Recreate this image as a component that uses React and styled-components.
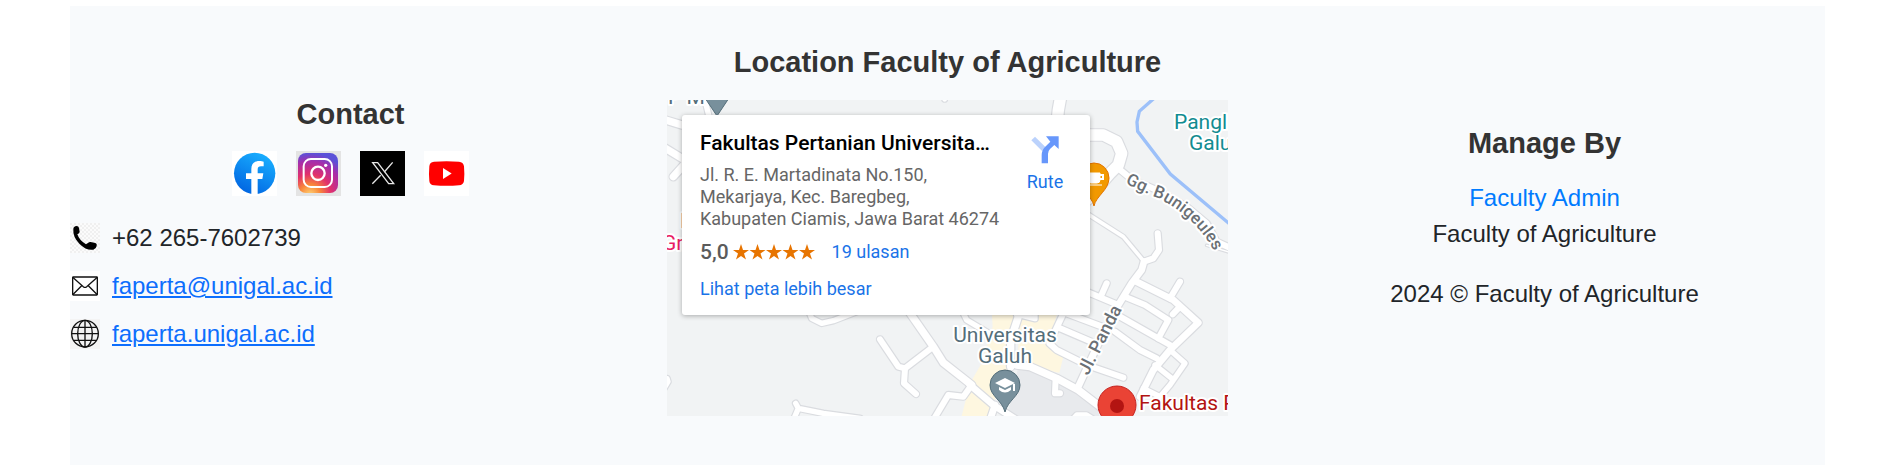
import React from "react";
import styled, { createGlobalStyle } from "styled-components";

const GlobalStyle = createGlobalStyle`
  * { box-sizing: border-box; }
  body {
    margin: 0;
    background: #fff;
    color: #212529;
    font-family: "Liberation Sans", Arial, sans-serif;
    font-size: 24px;
    line-height: 36px;
  }
`;

const Page = styled.div`
  padding: 6px 67px 0 70px;
`;

const Footer = styled.footer`
  display: grid;
  grid-template-columns: repeat(3, minmax(0, 1fr));
  column-gap: 36px;
  align-items: center;
  padding: 39px 0 49px;
  background: #f8fafc;
`;

const Column = styled.section`
  text-align: center;
`;

const Heading = styled.h2`
  margin: 0 0 ${(p) => p.$gap || 20}px;
  color: #333;
  font-size: 29px;
  line-height: 35px;
  font-weight: 700;
`;

const SocialRow = styled.nav`
  display: flex;
  justify-content: center;
  gap: 19px;
  margin-bottom: 24px;
`;

const SocialLink = styled.a`
  display: block;
  width: 45px;
  height: 45px;
  svg { display: block; }
`;

const ContactList = styled.ul`
  list-style: none;
  margin: 0;
  padding: 0;
`;

const ContactItem = styled.li`
  display: flex;
  align-items: center;
  gap: 12px;
  margin-bottom: 12px;
`;

const ContactLink = styled.a`
  color: #0d6efd;
  text-decoration: underline;
`;

const AdminLink = styled.a`
  color: #007bff;
  text-decoration: none;
`;

const Paragraph = styled.p`
  margin: 0 0 24px;
`;

const MapFrame = styled.div`
  position: relative;
  height: 316px;
  overflow: hidden;
  text-align: left;
  font-family: Roboto, sans-serif;
`;

const MapCanvas = styled.svg`
  display: block;
  width: 100%;
  height: 100%;
`;

const PlaceCard = styled.article`
  position: absolute;
  top: 15px;
  left: 15px;
  display: flex;
  width: 408px;
  height: 200px;
  padding: 17px 18px;
  background: #fff;
  border-radius: 3px;
  box-shadow: 0 1px 5px rgba(0, 0, 0, 0.3);
  font-size: 18px;
  line-height: 22px;
`;

const PlaceInfo = styled.div`
  flex: 1;
  min-width: 0;
`;

const PlaceName = styled.h3`
  margin: 0 0 10px;
  color: #000;
  font-size: 21px;
  line-height: 22px;
  font-weight: 500;
  white-space: nowrap;
`;

const Address = styled.address`
  margin-bottom: 11px;
  color: #666;
  font-style: normal;
  white-space: nowrap;
`;

const Rating = styled.div`
  display: flex;
  align-items: center;
  margin-bottom: 15px;
`;

const Score = styled.span`
  margin-right: 4px;
  color: #5b5b5b;
  font-size: 21px;
  font-weight: 500;
`;

const Stars = styled.svg`
  margin-right: 16px;
`;

const MapLink = styled.a`
  color: #1a73e8;
  text-decoration: none;
`;

const RouteLink = styled(MapLink)`
  display: flex;
  flex-direction: column;
  align-items: center;
  gap: 7px;
  width: 54px;
  padding-top: 4px;
`;

function FacebookIcon() {
  return (
    <svg width="45" height="45" viewBox="0 0 135 135">
      <defs>
        <linearGradient id="fb" x1="0.2" y1="1" x2="0.7" y2="0">
          <stop offset="0" stopColor="#0062e0" />
          <stop offset="1" stopColor="#19afff" />
        </linearGradient>
      </defs>
      <rect width="135" height="135" fill="#fff" />
      <circle cx="68" cy="67" r="62" fill="url(#fb)" />
      <path d="M58 130V84H42V67H58V54C58 38 67 30 82 30C88 30 92 31 95 32V46H87C80 46 77 49 77 56V67H94L91 84H77V130Z" fill="#fff" />
    </svg>
  );
}

function InstagramIcon() {
  return (
    <svg width="45" height="45" viewBox="0 0 135 135">
      <defs>
        <radialGradient id="ig" cx="0.3" cy="1.05" r="1.05">
          <stop offset="0" stopColor="#fed576" />
          <stop offset="0.25" stopColor="#f9873a" />
          <stop offset="0.5" stopColor="#e1306c" />
          <stop offset="0.8" stopColor="#a62eab" />
          <stop offset="1" stopColor="#5b51d8" />
        </radialGradient>
      </defs>
      <rect width="135" height="135" fill="#e4e4e4" />
      <rect x="6" y="6" width="120" height="120" rx="24" fill="url(#ig)" />
      <rect x="23" y="24" width="85" height="84" rx="22" fill="none" stroke="#fff" strokeWidth="6" />
      <circle cx="66" cy="67" r="20" fill="none" stroke="#fff" strokeWidth="7" />
      <circle cx="89" cy="43" r="5" fill="#fff" />
    </svg>
  );
}

function XIcon() {
  return (
    <svg width="45" height="45" viewBox="0 0 135 135">
      <rect width="135" height="135" fill="#000" />
      <g fill="none" stroke="#e8e8e8" strokeWidth="4">
        <path d="M38 35H53L101 98H86Z" />
        <path d="M98 34L73 63M62 73L37 98" />
      </g>
    </svg>
  );
}

function YouTubeIcon() {
  return (
    <svg width="45" height="45" viewBox="0 0 135 135">
      <rect width="135" height="135" fill="#fff" />
      <path d="M30 32Q68 29 105 32Q118 33 120 46Q122 68 120 90Q118 102 105 103Q68 106 30 103Q17 102 16 90Q14 68 16 46Q17 33 30 32Z" fill="#f00" />
      <path d="M57 51L83 67.500L57 84Z" fill="#fff" />
    </svg>
  );
}

function PhoneIcon() {
  return (
    <svg width="30" height="30" viewBox="0 0 90 90">
      <defs>
        <pattern id="checks" width="12" height="12" patternUnits="userSpaceOnUse">
          <rect width="12" height="12" fill="#fbfbfb" />
          <path d="M0 0H6V6H0ZM6 6H12V12H6Z" fill="#f0f0f0" />
        </pattern>
      </defs>
      <rect width="90" height="90" fill="url(#checks)" />
      <path d="M10 18Q10 10 20 9Q26 9 27 15L29 26Q29 31 22 34Q28 52 48 64L55 59Q58 56 62 57L76 60Q82 62 80 69Q78 78 70 80Q50 84 28 62Q8 42 10 18Z" fill="#000" />
    </svg>
  );
}

function MailIcon() {
  return (
    <svg width="30" height="30" viewBox="0 0 90 90">
      <rect width="90" height="90" fill="#fff" />
      <g fill="none" stroke="#111" strokeWidth="4">
        <rect x="8" y="18" width="74" height="54" rx="2" />
        <path d="M8 19L40 47Q45 51 50 47L82 19M8 71L35 44M82 71L55 44" strokeWidth="4" />
      </g>
    </svg>
  );
}

function GlobeIcon() {
  return (
    <svg width="30" height="30" viewBox="0 0 90 90">
      <rect width="90" height="90" fill="#f4f4f4" />
      <g fill="none" stroke="#111" strokeWidth="4">
        <circle cx="45" cy="44" r="40" />
        <ellipse cx="45" cy="44" rx="22" ry="40" />
        <path d="M45 4V84M5 44H85M11 25H79M11 64H79" />
      </g>
    </svg>
  );
}

const socials = [
  { name: "Facebook", Icon: FacebookIcon },
  { name: "Instagram", Icon: InstagramIcon },
  { name: "X", Icon: XIcon },
  { name: "YouTube", Icon: YouTubeIcon },
];

/* Roads by map quadrant: [origin, [[path, width], ...]], in thirds of a pixel. */
const roads = [
  ["-21 -30", [
    ["M0 85L66 105", 22], ["M0 165L66 205L95 225", 22], ["M40 260L85 210", 22],
    ["M130 10L152 100", 16], ["M854 10V28", 14],
  ]],
  ["819 -30", [
    ["M364 10L355 60L352 90", 34],
    ["M440 135H490L530 155L545 190L535 225L510 250L440 330", 34],
    ["M535 235L575 268L650 300L740 350L800 400L830 455L880 478", 18],
    ["M440 370L550 440L600 500L612 515", 11],
    ["M653 430L657 480L640 505L612 515", 18],
  ]],
  ["-21 450", [
    ["M445 180L455 205L485 220L520 212L590 185", 16],
    ["M740 175L820 290L850 338L935 405", 22],
    ["M820 290L735 355L715 350L660 268", 18],
    ["M735 355L732 400L768 432", 18],
    ["M400 510L415 475L407 460M415 475L490 490L600 505", 16],
    ["M820 510L865 435L910 440L935 405", 18],
    ["M22 385L25 395L10 420", 14],
  ]],
  ["819 450", [
    ["M612 35L605 60L575 100L535 165L480 270L415 410", 20],
    ["M590 95L700 150L775 218L690 300L640 360L600 440", 20],
    ["M720 95L690 145M720 170L698 193", 18],
    ["M555 140L615 165L685 210L655 265", 18],
    ["M540 200L690 285M525 245L600 300L650 325", 18],
    ["M440 125L535 165M500 100L482 140", 18],
    ["M380 190L500 235M360 235L465 280", 18],
    ["M375 180L328 280L350 300L440 345L550 383", 18],
    ["M690 300L735 340L690 405L660 440L610 415M645 345L695 385", 16],
    ["M70 190L80 210L180 270M285 190V206L240 195", 16],
    ["M228 180L235 200L212 270V350", 22],
    ["M230 345L270 350L350 385L415 420L480 470", 22],
    ["M347 385L345 430L360 430", 18],
    ["M90 405L160 465L230 510M165 465L150 510", 20],
    ["M395 510L410 494H440L465 510", 14],
    ["M800 -14L880 10", 4],
  ]],
];

function RoadLayer({ color, extra }) {
  return (
    <g fill="none" stroke={color} strokeLinecap="round" strokeLinejoin="round">
      {roads.map(([origin, list]) => (
        <g key={origin} transform={`translate(${origin})`}>
          {list.map(([d, width]) => (
            <path key={d} d={d} strokeWidth={width + extra} />
          ))}
        </g>
      ))}
    </g>
  );
}

const Label = styled.text`
  font-family: Roboto, sans-serif;
  font-size: ${(p) => p.$size || 21}px;
  font-weight: ${(p) => p.$weight || 400};
  fill: ${(p) => p.$color};
  stroke: #fff;
  stroke-width: 4px;
  stroke-linejoin: round;
  paint-order: stroke;
`;

function CampusMap() {
  return (
    <MapCanvas viewBox="0 0 561 316" preserveAspectRatio="xMidYMid slice" role="img" aria-label="Map">
      <rect width="561" height="316" fill="#f1f3f4" />
      <g transform="scale(0.33333)">
        <g transform="translate(819 450)">
          <path d="M155 180H228L205 350L160 460L140 510H62L90 400L125 340L158 230Z" fill="#fef7e0" />
          <path d="M235 180H355L322 285L370 320L358 368L235 345Z" fill="#fef7e0" />
          <path d="M235 350L350 390L470 460L480 510H240L205 480Z" fill="#e8eaed" />
        </g>
        <RoadLayer color="#dadce0" extra={7} />
        <RoadLayer color="#fff" extra={0} />
        <path d="M1460 -4L1417 34L1410 66L1412 94L1510 222L1700 382" fill="none" stroke="#9cc0f9" strokeWidth="10" />
      </g>

      <Label x="1" y="4" $color="#546e7a">P M</Label>
      <path d="M38 -2H62L50 16Z" fill="#78909c" stroke="#546e7a" />
      <Label x="13" y="128" $color="#e91e63">I</Label>
      <Label x="-5" y="150" $color="#e91e63">Gr</Label>

      <path d="M427 106C425 96 412 90 412 78A15 15 0 0 1 442 78C442 90 429 96 427 106Z" fill="#f29900" stroke="#e37400" />
      <path d="M421 73H433V80Q433 83 430 83H424Q421 83 421 80ZM421 85H435" fill="#fff" stroke="#fff" />
      <path d="M433 75H436V79H433" fill="none" stroke="#fff" strokeWidth="2" />

      <Label x="507" y="29" $color="#128c91">Panglima</Label>
      <Label x="522" y="50" $color="#128c91">Galuh</Label>
      <path id="bunigeules" d="M458 83Q475 92 491 98Q530 118 548 153L556 172" fill="none" />
      <Label $size={17} $weight={500} $color="#6b7075">
        <textPath href="#bunigeules">Gg. Bunigeules</textPath>
      </Label>
      <Label $size={18} $weight={500} $color="#6b7075" transform="translate(421 276) rotate(-63)">Jl. Panda</Label>

      <Label x="338" y="242" textAnchor="middle" $color="#546e7a">Universitas</Label>
      <Label x="338" y="263" textAnchor="middle" $color="#546e7a">Galuh</Label>
      <path d="M338 312C335 300 323 296 323 285A15 15 0 0 1 353 285C353 296 341 300 338 312Z" fill="#78909c" stroke="#546e7a" />
      <path d="M328 283L338 278L348 283L338 288ZM332 287V290Q338 295 344 290V287L338 290ZM346 284H348V291H346Z" fill="#fff" />

      <circle cx="450" cy="305" r="19" fill="#ea4335" stroke="#c5221f" />
      <circle cx="450" cy="306" r="7" fill="#b31412" />
      <Label x="472" y="310" $color="#b31412">Fakultas Pertanian</Label>
    </MapCanvas>
  );
}

const star = "M8 0L10 6H16L11 9.500L13 15.500L8 12L3 15.500L5 9.500L0 6H6Z";

export default function App() {
  return (
    <>
      <GlobalStyle />
      <Page>
        <Footer>
          <Column>
            <Heading $gap={19}>Contact</Heading>
            <SocialRow aria-label="Social media">
              {socials.map(({ name, Icon }) => (
                <SocialLink key={name} href="#" aria-label={name}>
                  <Icon />
                </SocialLink>
              ))}
            </SocialRow>
            <ContactList>
              <ContactItem>
                <PhoneIcon />
                <span>+62 265-7602739</span>
              </ContactItem>
              <ContactItem>
                <MailIcon />
                <ContactLink href="mailto:faperta@unigal.ac.id">faperta@unigal.ac.id</ContactLink>
              </ContactItem>
              <ContactItem>
                <GlobeIcon />
                <ContactLink href="#">faperta.unigal.ac.id</ContactLink>
              </ContactItem>
            </ContactList>
          </Column>

          <Column>
            <Heading>Location Faculty of Agriculture</Heading>
            <MapFrame>
              <CampusMap />
              <PlaceCard>
                <PlaceInfo>
                  <PlaceName>Fakultas Pertanian Universita…</PlaceName>
                  <Address>
                    Jl. R. E. Martadinata No.150,
                    <br />
                    Mekarjaya, Kec. Baregbeg,
                    <br />
                    Kabupaten Ciamis, Jawa Barat 46274
                  </Address>
                  <Rating>
                    <Score>5,0</Score>
                    <Stars width="83" height="16" viewBox="0 0 83 16" aria-hidden="true">
                      {[0, 1, 2, 3, 4].map((i) => (
                        <path key={i} d={star} fill="#e77400" transform={`translate(${i * 16.5} 0)`} />
                      ))}
                    </Stars>
                    <MapLink href="#">19 ulasan</MapLink>
                  </Rating>
                  <MapLink href="#">Lihat peta lebih besar</MapLink>
                </PlaceInfo>
                <RouteLink href="#">
                  <svg width="28" height="28" viewBox="0 0 84 84" aria-hidden="true">
                    <path d="M1 13L12 2L44 34L34 46Z" fill="#bbd2fc" />
                    <path d="M32 82V58Q32 43 42 33L58 17L45 1H83V39L70 27L57 39Q51 45 51 54V82Z" fill="#6797fb" />
                  </svg>
                  Rute
                </RouteLink>
              </PlaceCard>
            </MapFrame>
          </Column>

          <Column>
            <Heading $gap={19}>Manage By</Heading>
            <Paragraph>
              <AdminLink href="#">Faculty Admin</AdminLink>
              <br />
              Faculty of Agriculture
            </Paragraph>
            <Paragraph>2024 © Faculty of Agriculture</Paragraph>
          </Column>
        </Footer>
      </Page>
    </>
  );
}
